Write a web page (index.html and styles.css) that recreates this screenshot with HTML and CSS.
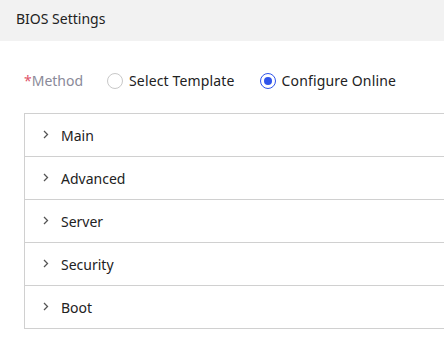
FILE: index.html
```html
<!DOCTYPE html>
<html lang="en">
<head>
    <meta charset="UTF-8">
    <title>BIOS Settings</title>
    <link rel="stylesheet" href="styles.css">
</head>
<body>
    <div class="page-header">BIOS Settings</div>

    <div class="content">
        <div class="method-row">
            <span class="method-label"><span class="required">*</span>Method</span>
            <label class="radio">
                <span class="radio-circle"></span>
                <span>Select Template</span>
            </label>
            <label class="radio checked">
                <span class="radio-circle"></span>
                <span>Configure Online</span>
            </label>
        </div>

        <!-- Collapse panels -->
        <div class="collapse">
            <div class="collapse-item"><svg class="arrow" width="6" height="9" viewBox="0 0 6 9"><path d="M1 1l3.5 3.5L1 8" fill="none" stroke="#555" stroke-width="1.3"/></svg>Main</div>
            <div class="collapse-item"><svg class="arrow" width="6" height="9" viewBox="0 0 6 9"><path d="M1 1l3.5 3.5L1 8" fill="none" stroke="#555" stroke-width="1.3"/></svg>Advanced</div>
            <div class="collapse-item"><svg class="arrow" width="6" height="9" viewBox="0 0 6 9"><path d="M1 1l3.5 3.5L1 8" fill="none" stroke="#555" stroke-width="1.3"/></svg>Server</div>
            <div class="collapse-item"><svg class="arrow" width="6" height="9" viewBox="0 0 6 9"><path d="M1 1l3.5 3.5L1 8" fill="none" stroke="#555" stroke-width="1.3"/></svg>Security</div>
            <div class="collapse-item"><svg class="arrow" width="6" height="9" viewBox="0 0 6 9"><path d="M1 1l3.5 3.5L1 8" fill="none" stroke="#555" stroke-width="1.3"/></svg>Boot</div>
        </div>
    </div>
</body>
</html>
```

FILE: styles.css
```css
body {
    margin: 0;
    font-family: "Noto Sans", "Open Sans", sans-serif;
    font-size: 14px;
    color: #333;
    background: #fff;
    overflow: hidden;
}

.page-header {
    height: 41px;
    line-height: 38px;
    padding-left: 16px;
    background-color: #f2f2f2;
    color: #222;
}

.content {
    padding: 0 0 0 24px;
}

.method-row {
    display: flex;
    align-items: center;
    height: 39px;
    margin-top: 20px;
    margin-bottom: 13px;
}

.method-label {
    color: #8a8a99;
    width: 83px;
}

.required {
    color: #e0556a;
}

.radio {
    display: flex;
    align-items: center;
    gap: 6px;
    margin-right: 25px;
    color: #222;
    letter-spacing: 0.15px;
}

.radio-circle {
    width: 14px;
    height: 14px;
    border: 1px solid #c8c8c8;
    border-radius: 50%;
    display: flex;
    align-items: center;
    justify-content: center;
}

.radio.checked .radio-circle {
    border-color: #2f54eb;
}

.radio.checked .radio-circle::after {
    content: "";
    width: 8px;
    height: 8px;
    border-radius: 50%;
    background: #2f54eb;
}

.collapse {
    border: 1px solid #d0d0d0;
    border-right: none;
    margin-right: -10px;
}

.collapse-item {
    height: 42px;
    display: flex;
    align-items: center;
    padding-left: 18px;
    border-top: 1px solid #d0d0d0;
    color: #222;
}

.collapse-item:first-child {
    border-top: none;
}

.arrow {
    margin-right: 12px;
    margin-top: -2px;
}
```
